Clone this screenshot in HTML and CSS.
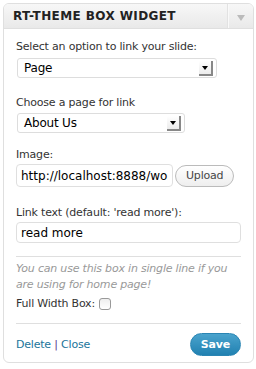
FILE: index.html
```html
<!DOCTYPE html>
<html lang="en">
<head>
    <meta charset="UTF-8">
    <title>RT-Theme Box Widget</title>
    <link rel="stylesheet" href="styles.css">
</head>
<body>
    <div class="widget">
        <div class="widget-top">
            <div class="widget-title">RT-THEME BOX WIDGET</div>
            <div class="widget-toggle"><span class="toggle-arrow"></span></div>
        </div>
        <div class="widget-inside">
            <div class="field field-link-type">
                <label class="field-label">Select an option to link your slide:</label>
                <div class="select select-wide">
                    <span class="select-value">Page</span>
                    <span class="select-arrow"></span>
                </div>
            </div>

            <div class="field field-page">
                <label class="field-label">Choose a page for link</label>
                <div class="select select-narrow">
                    <span class="select-value">About Us</span>
                    <span class="select-arrow"></span>
                </div>
            </div>

            <div class="field field-image">
                <label class="field-label">Image:</label>
                <div class="upload-row">
                    <input class="text-input url-input" type="text" value="http://localhost:8888/wordpress/wp-content/uploads">
                    <div class="button">Upload</div>
                </div>
            </div>

            <div class="field field-link-text">
                <label class="field-label">Link text (default: 'read more'):</label>
                <input class="text-input link-input" type="text" value="read more">
            </div>

            <hr class="divider">

            <p class="hint">You can use this box in single line if you are using for home page!</p>
            <div class="checkbox-row">
                <span>Full Width Box:</span>
                <span class="checkbox"></span>
            </div>

            <hr class="divider divider-bottom">

            <div class="widget-control">
                <div class="control-links">
                    <a href="#">Delete</a> <span class="sep">|</span> <a href="#">Close</a>
                </div>
                <div class="button-primary">Save</div>
            </div>
        </div>
    </div>
</body>
</html>
```

FILE: styles.css
```css
body {
    margin: 0;
    background: #fff;
    font-family: "DejaVu Sans", sans-serif;
    font-size: 11px;
    letter-spacing: -0.2px;
    color: #333;
}
.widget {
    margin: 3px 2px 4px 3px;
    border: 1px solid #dfdfdf;
    border-radius: 6px;
    background: #fff;
    overflow: hidden;
}
.widget-top {
    display: flex;
    height: 24px;
    background: linear-gradient(#f7f7f7, #e9e9e9);
    border-bottom: 1px solid #dfdfdf;
}
.widget-title {
    flex: 1;
    padding-left: 9px;
    font-size: 12px;
    font-weight: bold;
    letter-spacing: 0.4px;
    line-height: 25px;
    color: #222;
}
.widget-toggle {
    width: 24px;
    border-left: 1px solid #f9f9f9;
    box-shadow: -1px 0 0 #e2e2e2;
    display: flex;
    align-items: center;
    justify-content: center;
}
.toggle-arrow {
    width: 0;
    height: 0;
    border-style: solid;
    border-width: 6px 4px 0 4px;
    border-color: #bbb transparent transparent transparent;
    margin-top: 3px;
}
.widget-inside {
    padding: 11px 12px 6px 12px;
}
.field-label {
    display: block;
    line-height: 14px;
}
.field-link-type { margin-bottom: 18px; }
.field-link-type .field-label { margin-bottom: 4px; }
.field-page { margin-bottom: 15px; }
.field-page .field-label { margin-bottom: 3px; }
.field-image { margin-bottom: 19px; }
.field-image .field-label { margin-bottom: 2px; }
.field-link-text { margin-bottom: 13px; }
.field-link-text .field-label { margin-bottom: 2px; }

.select {
    display: flex;
    align-items: center;
    height: 18px;
    border: 1px solid #ddd;
    border-radius: 3px;
    padding-left: 6px;
    background: #fff;
    color: #000;
    font-size: 12px;
}
.select-wide { width: 192px; margin-left: 1px; }
.select-narrow { width: 160px; margin-left: 1px; }
.select-value { flex: 1; }
.select-arrow {
    width: 12px;
    height: 13px;
    margin-right: 3px;
    background: linear-gradient(#fff, #ececec);
    border-right: 2px solid #888;
    border-bottom: 2px solid #888;
    position: relative;
}
.select-arrow::after {
    content: '';
    position: absolute;
    left: 3px;
    top: 5px;
    border-style: solid;
    border-width: 4px 3px 0 3px;
    border-color: #000 transparent transparent transparent;
}
.upload-row {
    display: flex;
    align-items: center;
    gap: 2px;
}
.text-input {
    display: block;
    box-sizing: border-box;
    width: 100%;
    height: 23px;
    margin: 0;
    border: 1px solid #dfdfdf;
    border-radius: 4px;
    padding: 0 4px;
    color: #000;
    font-family: "DejaVu Sans", sans-serif;
    font-size: 12px;
    background: #fff;
    outline: none;
}
.url-input {
    width: 157px;
    flex: none;
}
.link-input {
    height: 21px;
}
.button {
    height: 20px;
    line-height: 20px;
    padding: 0 10px;
    border: 1px solid #bbb;
    border-radius: 11px;
    background: linear-gradient(#fff, #eee);
    color: #464646;
    font-size: 11px;
}
.divider {
    border: 0;
    border-top: 1px solid #dfdfdf;
    margin: 0 0 4px 0;
}
.divider-bottom {
    margin-bottom: 9px;
}
.hint {
    margin: 0 0 4px 0;
    font-style: italic;
    color: #999;
    line-height: 16px;
}
.checkbox-row {
    display: flex;
    align-items: center;
    gap: 4px;
    line-height: 14px;
    margin-bottom: 12px;
}
.checkbox {
    width: 10px;
    height: 10px;
    border: 1px solid #999;
    border-radius: 3px;
    background: linear-gradient(#eee, #fff);
}
.widget-control {
    display: flex;
    align-items: center;
    justify-content: space-between;
}
.control-links a {
    color: #21759b;
    text-decoration: none;
}
.sep {
    color: #5a3d8a;
}
.button-primary {
    height: 21px;
    line-height: 21px;
    padding: 0 10px;
    border-radius: 12px;
    background: linear-gradient(#4aa3cd, #2181b1);
    border: 1px solid #2a85b3;
    color: #fff;
    font-weight: bold;
    font-size: 11px;
}
```
